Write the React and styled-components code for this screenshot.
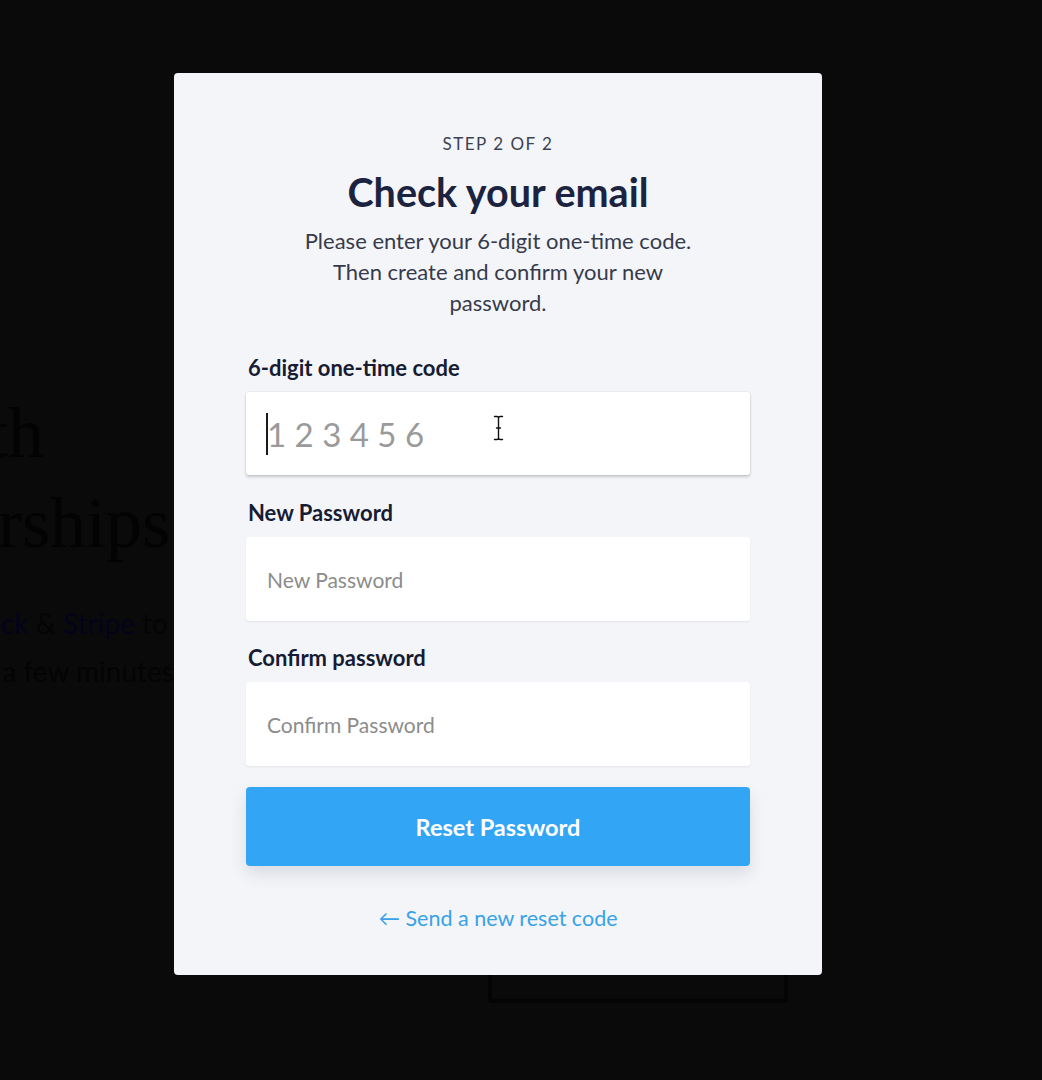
import React from "react";
import styled, { createGlobalStyle } from "styled-components";

const GlobalStyle = createGlobalStyle`
  * {
    box-sizing: border-box;
  }
  html,
  body {
    margin: 0;
    height: 100%;
    overflow: hidden;
    background: #0a0a0a;
  }
  body {
    font-family: Lato, "Open Sans", Arial, sans-serif;
  }
`;

/* page behind the dialog, dimmed almost to black */
const Page = styled.div`
  display: flex;
  height: 100vh;
  overflow: hidden;
  background: #0a0a0a;
`;

const Hero = styled.div`
  flex: none;
  width: 520px;
  margin-left: -214px;
  padding-top: 388px;
`;

const HeroTitle = styled.h1`
  margin: 0;
  font-family: "Liberation Serif", "DejaVu Serif", serif;
  font-weight: 400;
  font-size: 72px;
  line-height: 90px;
  color: #030303;
  white-space: nowrap;
`;

const HeroText = styled.p`
  margin: 31px 0 0 7px;
  font-family: Lato, sans-serif;
  font-size: 28px;
  line-height: 48px;
  color: #040404;
  white-space: nowrap;
`;

const HeroLink = styled.span`
  color: #03031a;
`;

const Aside = styled.div`
  flex: none;
  width: 300px;
  margin-left: 182px;
  padding-top: 300px;
`;

const AsideCard = styled.div`
  height: 703px;
  border: 4px solid #040404;
  border-radius: 4px;
`;

/* dialog */
const Overlay = styled.div`
  position: fixed;
  inset: 0;
  display: flex;
  align-items: flex-start;
  padding: 73px 0 0 174px;
`;

const Dialog = styled.div`
  width: 648px;
  padding: 61px 72px 45px;
  background: #f4f5f8;
  border-radius: 4px;
  display: flex;
  flex-direction: column;
`;

const Step = styled.div`
  text-align: center;
  font-size: 17px;
  line-height: 20px;
  letter-spacing: 1.5px;
  color: #3d4252;
`;

const Title = styled.h2`
  margin: 15px 0 0;
  text-align: center;
  font-size: 39.5px;
  line-height: 46px;
  font-weight: 700;
  color: #1b2340;
`;

const Intro = styled.p`
  margin: 10px auto 0;
  max-width: 400px;
  text-align: center;
  font-size: 22px;
  line-height: 31px;
  color: #363b4c;
`;

const Field = styled.div`
  margin-top: ${(p) => p.$gap}px;
  display: flex;
  flex-direction: column;
  gap: 12px;
`;

const Label = styled.label`
  font-size: 22px;
  line-height: 24px;
  font-weight: 700;
  color: #161c34;
  padding-left: 2px;
`;

const InputWrap = styled.div`
  position: relative;
`;

const Input = styled.input`
  display: block;
  width: 100%;
  height: ${(p) => (p.$code ? 83 : 84)}px;
  padding: 0 21px;
  border: none;
  border-radius: 3px;
  background: #fff;
  font-family: Lato, sans-serif;
  font-size: ${(p) => (p.$code ? 33 : 21)}px;
  color: #222;
  outline: none;
  box-shadow: ${(p) =>
    p.$code
      ? "0 2px 3px rgba(0, 0, 0, 0.18), 0 0 0 1px rgba(0, 0, 0, 0.03)"
      : "0 1px 2px rgba(0, 0, 0, 0.07)"};

  &::placeholder {
    color: ${(p) => (p.$code ? "#9a9a9a" : "#8c8c8c")};
  }
`;

const Caret = styled.span`
  position: absolute;
  left: 20px;
  top: 21px;
  width: 2px;
  height: 42px;
  background: #1a1a1a;
  pointer-events: none;
`;

const Cursor = styled.svg`
  position: absolute;
  left: 246px;
  top: 22px;
  pointer-events: none;
`;

const Button = styled.button`
  margin-top: 21px;
  height: 79px;
  border: none;
  border-radius: 4px;
  background: #33a5f5;
  color: #fff;
  font-family: Lato, sans-serif;
  font-size: 23.5px;
  font-weight: 700;
  box-shadow: 0 8px 16px rgba(20, 40, 70, 0.12);
  cursor: pointer;
`;

const BackLink = styled.a`
  margin-top: 40px;
  text-align: center;
  font-size: 21.5px;
  line-height: 24px;
  color: #38a2e8;
  text-decoration: none;
`;

const ibeam =
  "M2.5 2.5h2.5c1 0 1.5.6 1.5 1.5M10.5 2.5H8C7 2.5 6.5 3.1 6.5 4v20c0 .9-.5 1.5-1.5 1.5H2.5M10.5 25.5H8c-1 0-1.5-.6-1.5-1.5M4.5 14h4";

const IBeam = () => (
  <Cursor width="13" height="28" viewBox="0 0 13 28">
    <path d={ibeam} fill="none" stroke="#fff" strokeWidth="3" strokeLinecap="round" />
    <path d={ibeam} fill="none" stroke="#111" strokeWidth="1.4" strokeLinecap="round" />
  </Cursor>
);

export default function App() {
  return (
    <>
      <GlobalStyle />
      <Page>
        <Hero>
          <HeroTitle>
            Sell with
            <br />
            memberships
          </HeroTitle>
          <HeroText>
            Connect your Sla<HeroLink>ck</HeroLink> & <HeroLink>Stripe</HeroLink> to launch
            <br />
            your paid club in a few minutes.
          </HeroText>
        </Hero>
        <Aside>
          <AsideCard />
        </Aside>
      </Page>

      <Overlay>
        <Dialog>
          <Step>STEP 2 OF 2</Step>
          <Title>Check your email</Title>
          <Intro>
            Please enter your 6-digit one-time code. Then create and confirm
            your new password.
          </Intro>

          <Field $gap={38}>
            <Label htmlFor="code">6-digit one-time code</Label>
            <InputWrap>
              <Input id="code" $code placeholder="1 2 3 4 5 6" />
              <Caret />
              <IBeam />
            </InputWrap>
          </Field>

          <Field $gap={26}>
            <Label htmlFor="password">New Password</Label>
            <Input id="password" type="password" placeholder="New Password" />
          </Field>

          <Field $gap={25}>
            <Label htmlFor="confirm">Confirm password</Label>
            <Input id="confirm" type="password" placeholder="Confirm Password" />
          </Field>

          <Button type="button">Reset Password</Button>
          <BackLink href="#">← Send a new reset code</BackLink>
        </Dialog>
      </Overlay>
    </>
  );
}
